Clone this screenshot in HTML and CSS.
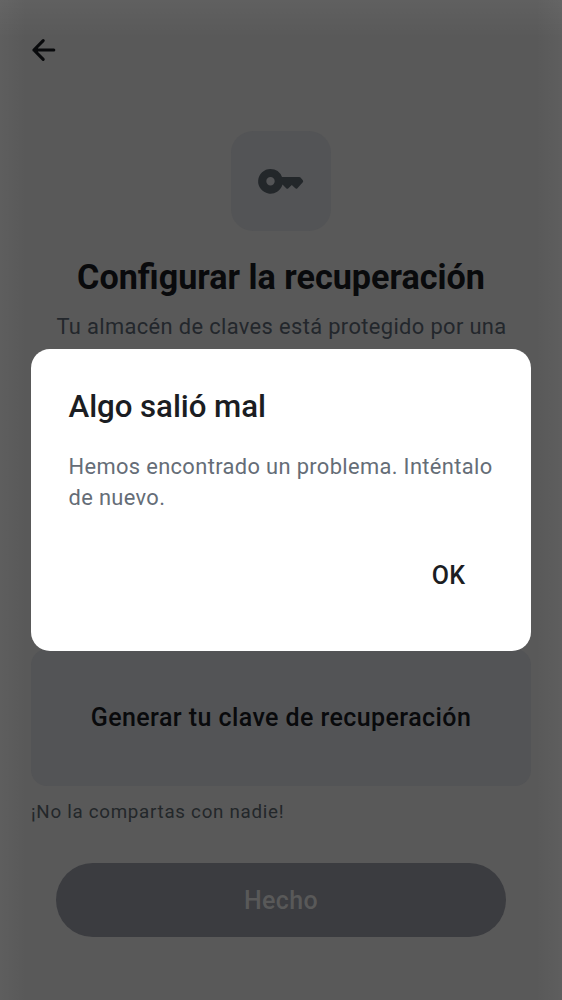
FILE: index.html
```html
<!DOCTYPE html>
<html lang="es">
<head>
<meta charset="utf-8">
<title>Configurar la recuperación</title>
<link rel="stylesheet" href="styles.css">
</head>
<body>
<div class="screen">
  <header class="topbar">
    <svg class="back" viewBox="0 0 38 38" width="38" height="38" aria-label="Atrás"><path d="M18.2 9.7 8.9 19l9.3 9.3M8.9 19H28.8" fill="none" stroke="currentColor" stroke-width="3.1" stroke-linecap="round" stroke-linejoin="round"/><path d="M8 19l5-5v10z" fill="currentColor"/></svg>
  </header>
  <main class="content">
    <div class="hero">
      <svg viewBox="0 0 50 50" width="50" height="50"><path fill="currentColor" fill-rule="evenodd" d="M14.4 12.9A12.4 12.4 0 0 1 26 21H43.3Q44 21 44.5 21.5L46.8 24.2Q47.6 25.2 46.8 26.2L41.4 32.2Q40.4 33.3 39.3 32.3L35.8 29 32.4 32.3Q31.3 33.3 30.2 32.3L26.5 28.6A12.4 12.4 0 1 1 14.4 12.9ZM14.5 21.1a4.2 4.2 0 1 0 0 8.4a4.2 4.2 0 1 0 0-8.4Z"/></svg>
    </div>
    <h1 class="title">Configurar la recuperación</h1>
    <p class="intro">Tu almacén de claves está protegido por una<br>clave de recuperación. Si necesitas una nueva</p>
    <div class="generate">Generar tu clave de recuperación</div>
    <p class="hint">¡No la compartas con nadie!</p>
  </main>
  <footer class="actions">
    <button class="done">Hecho</button>
  </footer>
  <div class="overlay">
    <section class="dialog" role="alertdialog">
      <h2 class="dialog-title">Algo salió mal</h2>
      <p class="dialog-text">Hemos encontrado un problema. Inténtalo<br>de nuevo.</p>
      <div class="dialog-actions"><button class="ok">OK</button></div>
    </section>
  </div>
</div>
</body>
</html>
```
FILE: styles.css
```css
* { box-sizing: border-box; }
body { margin: 0; font-family: Roboto, sans-serif; }
h1, h2, p { margin: 0; }
button { border: 0; background: none; padding: 0; font-family: inherit; }

.screen {
  position: relative;
  width: 562px;
  height: 1000px;
  overflow: hidden;
  display: flex;
  flex-direction: column;
  background:
    linear-gradient(to bottom, rgba(255,255,255,.045), rgba(255,255,255,0) 38px),
    linear-gradient(to right, rgba(255,255,255,.03), rgba(255,255,255,0) 26px, rgba(255,255,255,0) 536px, rgba(255,255,255,.03)),
    #595959;
  color: #090a0c;
}
.topbar { height: 100px; flex: none; padding: 31px 25px 0; }
.back { display: block; }
.content { flex: none; height: 762.5px; padding: 31px 31px 0; display: flex; flex-direction: column; align-items: center; }
.hero {
  width: 100px; height: 100px; flex: none;
  display: flex; align-items: center; justify-content: center;
  border-radius: 22px;
  background: #535456;
  color: #23272a;
}
.title { margin-top: 25px; font-size: 34.15px; line-height: 43.75px; font-weight: 700; white-space: nowrap; }
.intro { margin-top: 11.25px; text-align: center; font-size: 21.875px; line-height: 31.25px; letter-spacing: .37px; padding-left: 1px; color: #23272c; white-space: nowrap; }
.generate {
  margin-top: 275.75px;
  width: 500px; height: 137px; flex: none;
  display: flex; align-items: center; justify-content: center;
  border-radius: 16px;
  background: #535456;
  font-size: 25px; font-weight: 500; letter-spacing: .42px;
}
.hint { align-self: flex-start; margin-top: 14px; font-size: 18.75px; line-height: 25px; letter-spacing: .72px; color: #23272a; }
.actions { padding: 0 56px; }
.done {
  width: 450px; height: 74.5px; display: block;
  padding-top: 1px;
  border-radius: 38px;
  background: #3b3c40;
  color: #595959;
  font-size: 25px; font-weight: 500; letter-spacing: .38px;
}
.overlay { position: absolute; inset: 0; display: flex; align-items: center; justify-content: center; }
.dialog { width: 500px; height: 301.6px; padding: 37.5px; border-radius: 19px; background: #fff; }
.dialog-title { font-size: 31.25px; line-height: 40px; font-weight: 500; letter-spacing: -.06px; color: #1b1d22; }
.dialog-text { margin-top: 24px; font-size: 21.875px; line-height: 31.25px; letter-spacing: .36px; color: #656d77; white-space: nowrap; }
.dialog-actions { display: flex; justify-content: flex-end; margin-top: 31px; padding-right: 28px; }
.ok { height: 62px; font-size: 25px; font-weight: 500; letter-spacing: .38px; color: #1b1d22; }
```
